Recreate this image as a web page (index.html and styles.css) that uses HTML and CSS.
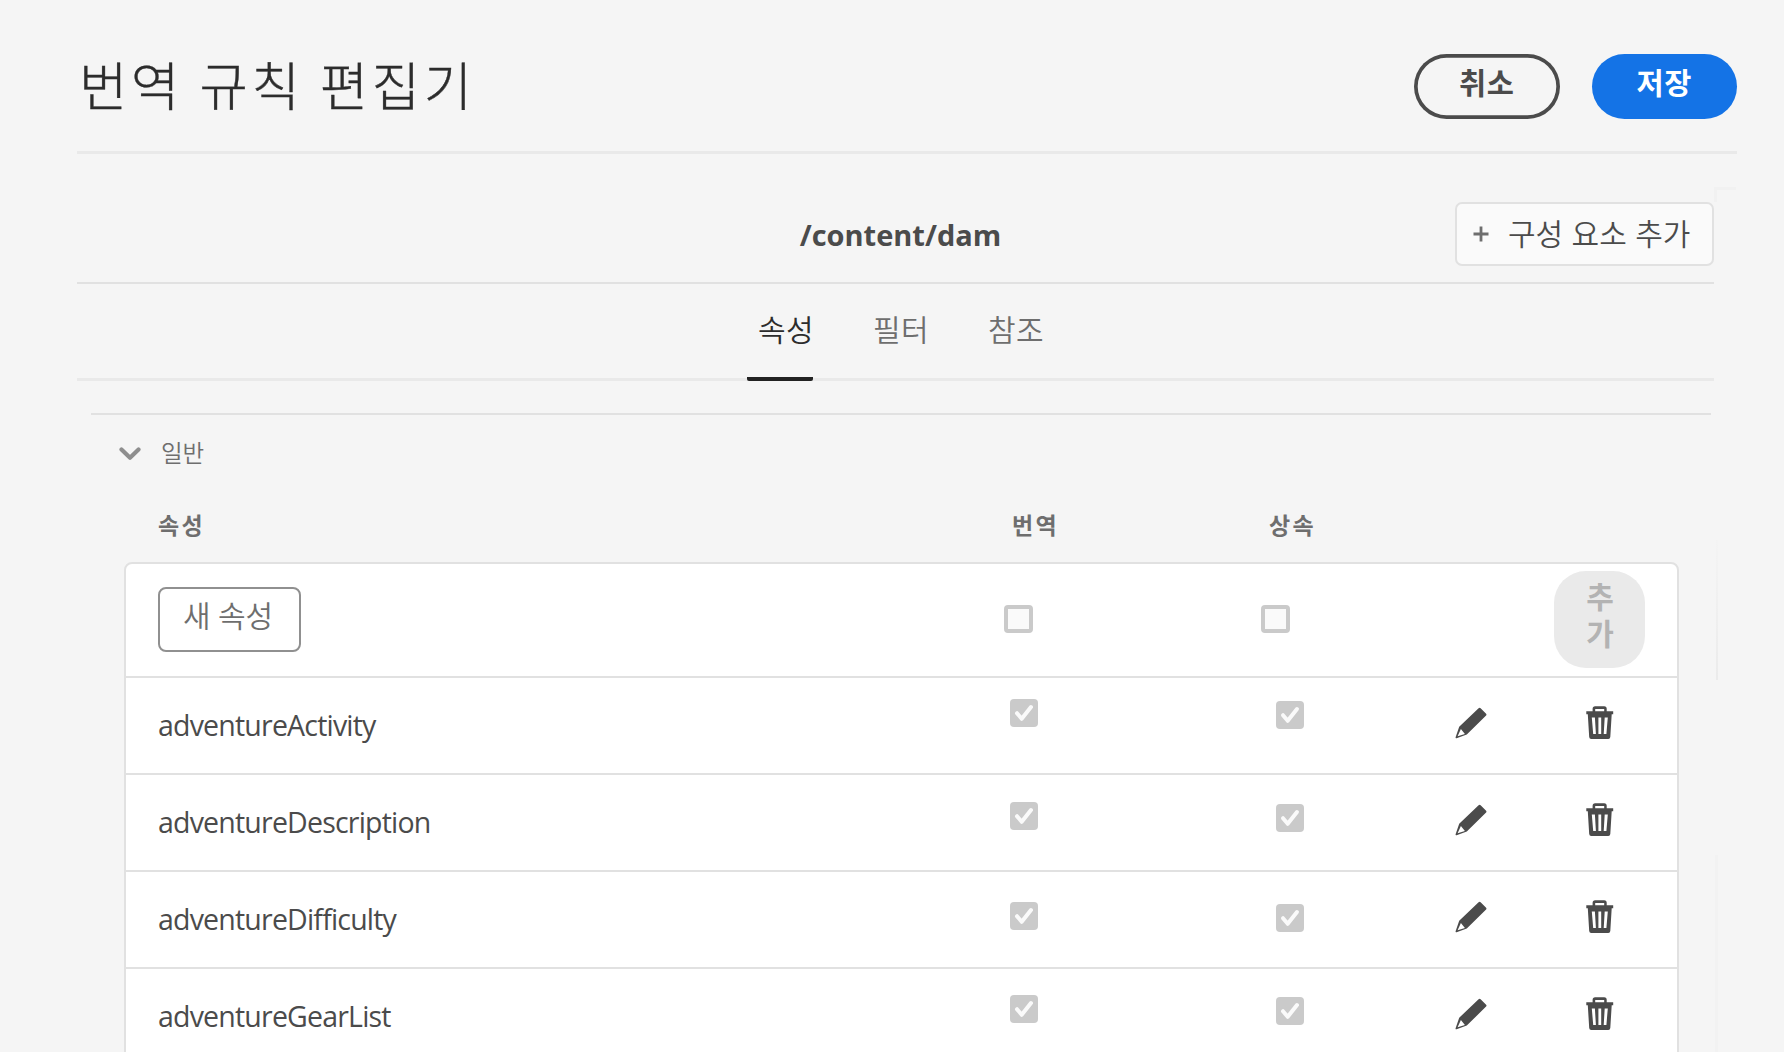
FILE: index.html
```html
<!DOCTYPE html>
<html lang="ko">
<head>
<meta charset="utf-8">
<title>번역 규칙 편집기</title>
<link rel="stylesheet" href="styles.css">
</head>
<body>
<svg class="symbols" aria-hidden="true">
  <symbol id="check" viewBox="0 0 28 28"><path d="M7 14.200 11.700 19.800 21 8" fill="none" stroke="#fafafa" stroke-width="4" stroke-linecap="round" stroke-linejoin="round"/></symbol>
  <symbol id="pencil" viewBox="0 0 32 32"><path fill="#4b4b4b" fill-rule="evenodd" d="M23.600 1.200q1-1 2 0l5.500 5.500q.9.9 0 1.800L11.800 27.600 1.600 31.300Q.3 31.600 .6 30.300L4.200 19.800ZM5.900 22 2.600 29.300 9.900 26.900Z"/></symbol>
  <symbol id="trash" viewBox="0 0 28 33"><path fill="#4b4b4b" fill-rule="evenodd" d="M6.600 5.200V2.800Q6.600 .3 9.100 .3H18.200Q20.700 .3 20.700 2.800V5.200H27.200V8.200H25.700L24.300 31Q24.100 33 22.300 33H5.200Q3.400 33 3.200 31L1.800 8.200H.3V5.200ZM9.200 5.200H18.200V3H9.200ZM5.800 11.500 7.200 28H9.900L8.900 11.500ZM12.400 11.500V28H15.200V11.500ZM18.700 11.500 17.700 28H20.400L21.800 11.500Z"/></symbol>
</svg>
<div class="page">
  <header class="header">
    <h1 class="title">번역 규칙 편집기</h1>
    <div class="actions">
      <button class="btn btn-cancel"><span>취소</span></button>
      <button class="btn btn-save"><span>저장</span></button>
    </div>
  </header>
  <div class="body">
  <main class="content">
    <div class="context">
      <h2 class="path">/content/dam</h2>
      <button class="add-context">
        <svg class="plus" viewBox="0 0 16 16"><path d="M8 .5V15.500M.5 8H15.500" stroke="#6e6e6e" stroke-width="2.800"/></svg>
        <span>구성 요소 추가</span>
      </button>
    </div>
    <nav class="tabs">
      <a class="tab active">속성</a>
      <a class="tab">필터</a>
      <a class="tab">참조</a>
    </nav>
    <section class="section">
      <div class="section-head">
        <svg class="chevron" viewBox="0 0 22 14"><path d="M2.500 2.500 11 10.700 19.500 2.500" fill="none" stroke="#8e8e8e" stroke-width="4.200" stroke-linecap="round" stroke-linejoin="round"/></svg>
        <span class="section-name">일반</span>
      </div>
      <div class="columns">
        <span>속성</span><span>번역</span><span>상속</span>
      </div>
      <div class="table">
        <div class="row row-new">
          <div><div class="input">새 속성</div></div>
          <div><i class="box"></i></div>
          <div><i class="box"></i></div>
          <div></div>
          <div><button class="add">추가</button></div>
        </div>
        <div class="row r1">
          <div class="name">adventureActivity</div>
          <div class="c1"><svg class="checked"><use href="#check"/></svg></div>
          <div class="c2"><svg class="checked"><use href="#check"/></svg></div>
          <div><svg class="pencil"><use href="#pencil"/></svg></div>
          <div><svg class="trash"><use href="#trash"/></svg></div>
        </div>
        <div class="row r2">
          <div class="name">adventureDescription</div>
          <div class="c1"><svg class="checked"><use href="#check"/></svg></div>
          <div class="c2"><svg class="checked"><use href="#check"/></svg></div>
          <div><svg class="pencil"><use href="#pencil"/></svg></div>
          <div><svg class="trash"><use href="#trash"/></svg></div>
        </div>
        <div class="row r3">
          <div class="name">adventureDifficulty</div>
          <div class="c1"><svg class="checked"><use href="#check"/></svg></div>
          <div class="c2"><svg class="checked"><use href="#check"/></svg></div>
          <div><svg class="pencil"><use href="#pencil"/></svg></div>
          <div><svg class="trash"><use href="#trash"/></svg></div>
        </div>
        <div class="row r4">
          <div class="name">adventureGearList</div>
          <div class="c1"><svg class="checked"><use href="#check"/></svg></div>
          <div class="c2"><svg class="checked"><use href="#check"/></svg></div>
          <div><svg class="pencil"><use href="#pencil"/></svg></div>
          <div><svg class="trash"><use href="#trash"/></svg></div>
        </div>
      </div>
    </section>
  </main>
  <div class="scroll-edge"></div>
  </div>
</div>
</body>
</html>
```
FILE: styles.css
```css
* { box-sizing: border-box; }
body {
  margin: 0;
  height: 1052px;
  overflow: hidden;
  background: #f5f5f5;
  color: #4b4b4b;
  font-family: "Open Sans", "Noto Sans CJK KR", sans-serif;
}
svg { display: block; }
button { font-family: inherit; padding: 0; border: 0; }
.symbols { width: 0; height: 0; position: absolute; }
.page { padding: 0 47px 0 77px; }
.header {
  display: flex;
  justify-content: space-between;
  height: 154px;
  border-bottom: 3px solid #e9e9e9;
}
.title {
  margin: 0;
  padding: 45px 0 0 2px;
  font: 300 52.5px/76px "Noto Sans CJK KR", sans-serif;
  color: #2c2c2c;
  letter-spacing: 3.7px;
  word-spacing: -2px;
  -webkit-text-stroke: 0.4px #2c2c2c;
}
.actions { display: flex; gap: 32px; padding: 54px 0 0; }
.btn {
  width: 145.5px;
  height: 64.5px;
  border-radius: 33px;
  font: 700 29.5px/40px "Noto Sans CJK KR", sans-serif;
  letter-spacing: .6px;
  padding-bottom: 11px;
}
.btn-cancel { box-shadow: inset 0 0 0 3.7px #4b4b4b; background: transparent; color: #4b4b4b; }
.btn-save { background: #1473e6; color: #fff; }
.body { display: flex; height: 898px; }
.content { width: 1637px; }
.scroll-edge {
  width: 22px;
  margin-top: 33px;
  border-top: 3px solid #f1f1f1;
  background:
    linear-gradient(#f1f1f1, #f1f1f1) 0 0 / 3px 12px no-repeat,
    linear-gradient(#f4f4f4, #ebebeb) 2px 350px / 2px 140px no-repeat,
    linear-gradient(#f2f2f2, #f2f2f2) 1px 665px / 3px 200px no-repeat;
}
.context {
  display: grid;
  grid-template-columns: 259px 1fr 259px;
  height: 129.5px;
  padding-top: 48px;
  border-bottom: 2px solid #e1e1e1;
}
.path {
  grid-column: 2;
  margin: 0;
  padding: 14px 0 0 10px;
  text-align: center;
  font-size: 29px;
  line-height: 38px;
  font-weight: 700;
}
.add-context {
  display: flex;
  align-items: center;
  width: 259px;
  height: 64px;
  padding: 0 0 5px 16px;
  border: 2px solid #e1e1e1;
  border-radius: 7px;
  background: #fafafa;
  color: #4b4b4b;
  font: 350 30px/40px "Noto Sans CJK KR", sans-serif;
  white-space: nowrap;
}
.plus { width: 16px; height: 16px; margin: 5px 19px 0 0; }
.tabs {
  display: flex;
  gap: 49px;
  height: 97.5px;
  padding-left: 670px;
  border-bottom: 3px solid #e9e9e9;
}
.tab {
  width: 66px;
  height: 97.5px;
  padding: 24.5px 0 0 11px;
  font: 350 30px/40px "Noto Sans CJK KR", sans-serif;
  letter-spacing: .5px;
  white-space: nowrap;
  color: #6e6e6e;
}
.tab.active { color: #2c2c2c; border-bottom: 4px solid #222; border-radius: 2px; }
.section { margin: 32px 3px 0 14px; border-top: 2px solid #e1e1e1; }
.section-head {
  display: flex;
  align-items: center;
  gap: 20px;
  height: 79px;
  padding: 0 0 1px 28px;
}
.chevron { width: 22px; height: 14px; }
.section-name {
  margin-top: -4px;
  font: 350 23.5px/32px "Noto Sans CJK KR", sans-serif;
  color: #6e6e6e;
}
.columns {
  display: grid;
  grid-template-columns: 854px 257px 1fr;
  height: 68px;
  padding: 14px 0 0 67px;
  font: 700 23px/32px "Noto Sans CJK KR", sans-serif;
  letter-spacing: 2.4px;
  color: #6e6e6e;
}
.table {
  width: 1555px;
  margin-left: 33px;
  border: 2px solid #e1e1e1;
  border-radius: 8px 8px 0 0;
  background: #fff;
}
.row {
  display: grid;
  grid-template-columns: 846px 257px 194px 99px 91px;
  height: 97px;
  padding-left: 32px;
  border-bottom: 2px solid #e1e1e1;
}
.row-new { height: 114px; align-items: center; padding-bottom: 2px; }
.input {
  width: 143px;
  height: 65px;
  padding: 5px 0 0 23px;
  border: 2px solid #909090;
  border-radius: 8px;
  color: #6e6e6e;
  font: 350 30px/40px "Noto Sans CJK KR", sans-serif;
  word-spacing: -1px;
  white-space: nowrap;
}
.box {
  display: block;
  width: 29px;
  height: 28px;
  border: 4px solid #cacaca;
  border-radius: 4px;
  background: #fafafa;
}
.add {
  display: block;
  width: 91px;
  height: 97px;
  padding: 0 29px 10px 30px;
  border-radius: 32px;
  background: #eaeaea;
  color: #b3b3b3;
  font: 700 30px/37px "Noto Sans CJK KR", sans-serif;
}
.name { padding-top: 27px; font-size: 28.5px; line-height: 40px; letter-spacing: -.8px; }
.checked { width: 28px; height: 28px; border-radius: 4px; background: #cacaca; }
.c1 { padding-left: 6px; }
.c2 { padding-left: 15px; }
.r1 .c1 { padding-top: 21px; } .r1 .c2 { padding-top: 23px; }
.r2 .c1 { padding-top: 27px; } .r2 .c2 { padding-top: 29px; }
.r3 .c1 { padding-top: 30px; } .r3 .c2 { padding-top: 32px; }
.r4 .c1 { padding-top: 26px; } .r4 .c2 { padding-top: 28px; }
.pencil { width: 32px; height: 32px; margin-top: 29px; }
.trash { width: 28px; height: 33px; margin: 28px 0 0 32px; }
```
